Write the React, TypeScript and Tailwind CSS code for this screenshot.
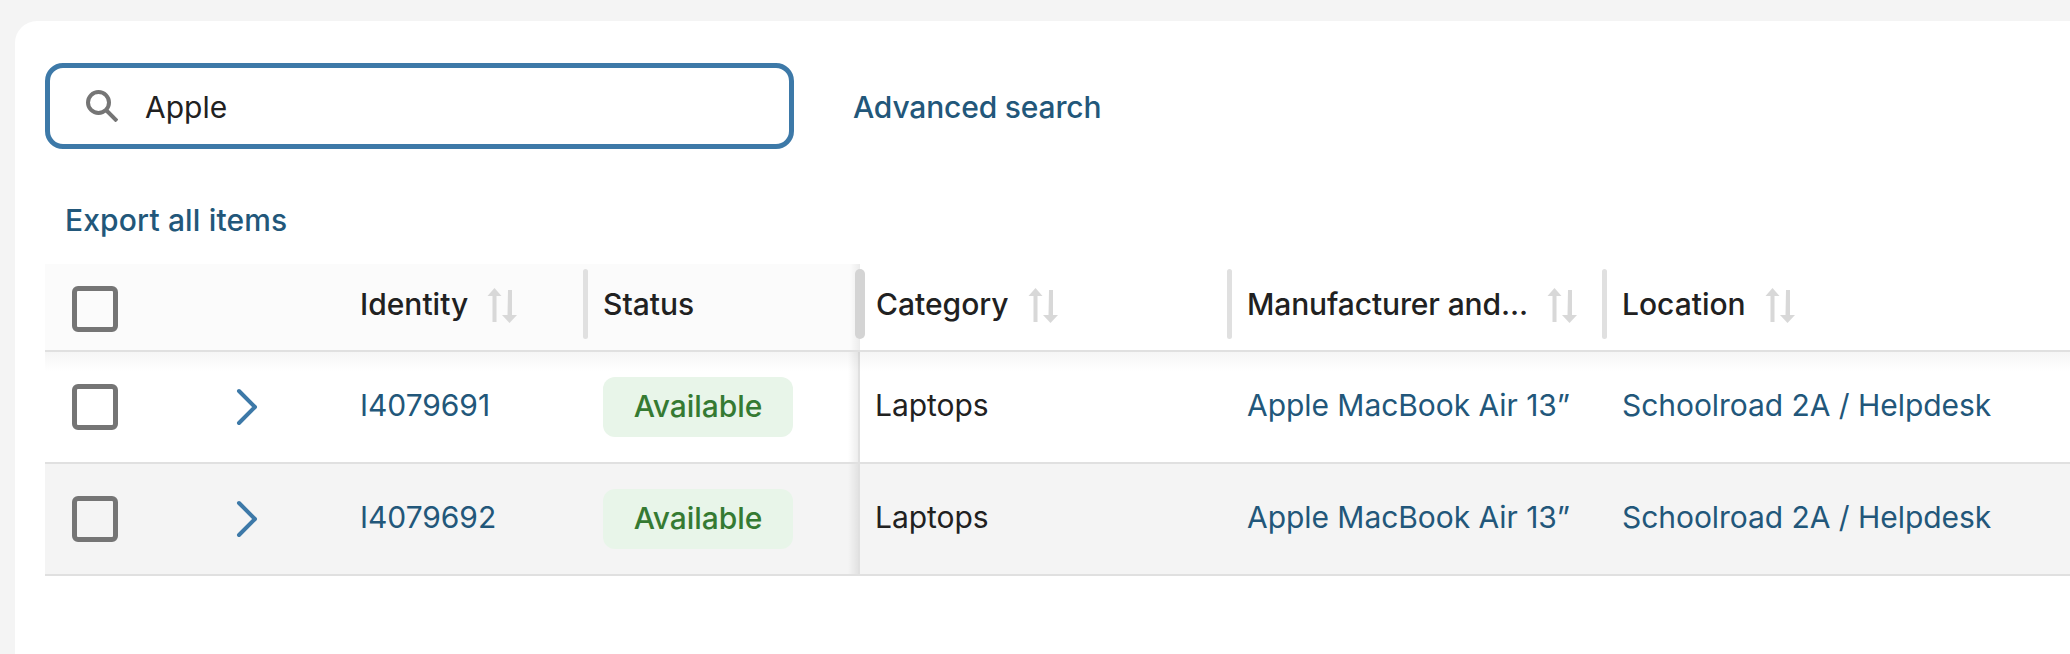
import React from 'react';

const rows = [
    { id: 'I4079691', bg: 'bg-white' },
    { id: 'I4079692', bg: 'bg-[#f4f4f4]' },
];

function Checkbox() {
    return <div className="h-[46px] w-[46px] rounded-[6px] border-[5px] border-[#757575]" />;
}

function SortIcon() {
    return (
        <svg width="30" height="36" viewBox="0 0 30 36" className="mb-[2px] shrink-0 text-[#d8d8d8]" fill="currentColor">
            <path d="M7.500 0l7 8h-5v26h-4V8h-5z" />
            <path d="M21 2h4v25h5l-7.500 8-7.500-8h5.500z" />
        </svg>
    );
}

function Chevron() {
    return (
        <svg width="24" height="38" viewBox="0 0 24 38" fill="none" stroke="#3d79a8" strokeWidth="4" strokeLinecap="round" strokeLinejoin="round">
            <path d="M3 3l16 16L3 35" />
        </svg>
    );
}

function HeaderCell({ label, sort = true, handle = true, className = 'pl-[18px]' }: { label: string; sort?: boolean; handle?: boolean; className?: string }) {
    return (
        <div className={`relative flex h-[86px] items-center gap-[19px] pr-[24px] ${className}`}>
            {handle && <div className="absolute left-[-2px] top-[5px] h-[70px] w-[5px] rounded-[3px] bg-[#e0e0e0]" />}
            <span className="pb-[6px] font-medium">{label}</span>
            {sort && <SortIcon />}
        </div>
    );
}

function App() {
    return (
        <div className="h-[654px] w-[2070px] overflow-hidden bg-[#f4f4f4] pl-[15px] pt-[21px] font-['Inter',sans-serif] text-[30px] text-[#212121]">
            <div className="h-full rounded-tl-[22px] bg-white pl-[30px] pt-[42px]">
                <div className="flex items-center">
                    <div className="flex h-[86px] w-[749px] items-center gap-[27px] rounded-[18px] border-[5px] border-[#3d79a8] pl-[36px]">
                        <svg width="32" height="32" viewBox="0 0 32 32" fill="none" stroke="#757575" strokeWidth="4">
                            <circle cx="12.500" cy="12.500" r="10.500" />
                            <path d="M20 20l11 11" />
                        </svg>
                        <span className="pt-[2px]">Apple</span>
                    </div>
                    <a className="ml-[59px] pt-[2px] font-medium tracking-[-0.17px] text-[#22577a]">Advanced search</a>
                </div>

                <a className="ml-[20px] mt-[53px] block h-[36px] font-medium leading-[36px] tracking-[0.16px] text-[#22577a]">Export all items</a>

                <div className="relative mt-[26px] grid grid-cols-[162px_135px_243px_275px_369px_375px_1fr] border-b-[2px] border-[#e0e0e0]">
                    <div className="flex h-[86px] items-center bg-[#fbfbfb] pl-[27px] pt-[4px]"><Checkbox /></div>
                    <div className="bg-[#fbfbfb]" />
                    <div className="bg-[#fbfbfb]"><HeaderCell label="Identity" handle={false} /></div>
                    <div className="relative bg-[#fbfbfb]">
                        <HeaderCell label="Status" sort={false} />
                        <div className="absolute right-0 top-0 h-full w-[10px] bg-gradient-to-r from-transparent to-[#00000010]" />
                        <div className="absolute right-[-5px] top-[5px] z-20 h-[70px] w-[10px] rounded-[5px] bg-[#d4d4d4]" />
                    </div>
                    <div><HeaderCell label="Category" handle={false} className="pl-[16px]" /></div>
                    <div><HeaderCell label="Manufacturer and..." className="pl-[18px] tracking-[-0.12px]" /></div>
                    <div><HeaderCell label="Location" /></div>
                    <div />
                    <div className="pointer-events-none absolute left-0 right-0 top-[88px] z-10 h-[20px] bg-gradient-to-b from-[#0000000a] to-transparent" />
                </div>

                {rows.map((row) => (
                    <div key={row.id} className={`grid h-[112px] grid-cols-[162px_135px_243px_275px_369px_375px_1fr] items-center border-b-[2px] border-[#e0e0e0] tracking-[-0.05px] ${row.bg}`}>
                        <div className="pl-[27px]"><Checkbox /></div>
                        <div className="pl-[29px]"><Chevron /></div>
                        <a className="pb-[3px] pl-[18px] text-[#22577a]">{row.id}</a>
                        <div className="relative flex h-full items-center border-r-[2px] border-[#e0e0e0] pl-[18px]">
                            <span className="flex h-[60px] w-[190px] items-center justify-center rounded-[12px] bg-[#e8f5e9] pb-[2px] font-medium text-[#357a32]">Available</span>
                            <div className="absolute right-0 top-0 h-full w-[10px] bg-gradient-to-r from-transparent to-[#00000012]" />
                        </div>
                        <div className="pb-[3px] pl-[15px]">Laptops</div>
                        <a className="pb-[3px] pl-[18px] text-[#22577a]">Apple MacBook Air 13”</a>
                        <a className="pb-[3px] pl-[18px] text-[#22577a]">Schoolroad 2A / Helpdesk</a>
                    </div>
                ))}
            </div>
        </div>
    );
}

export default App;
